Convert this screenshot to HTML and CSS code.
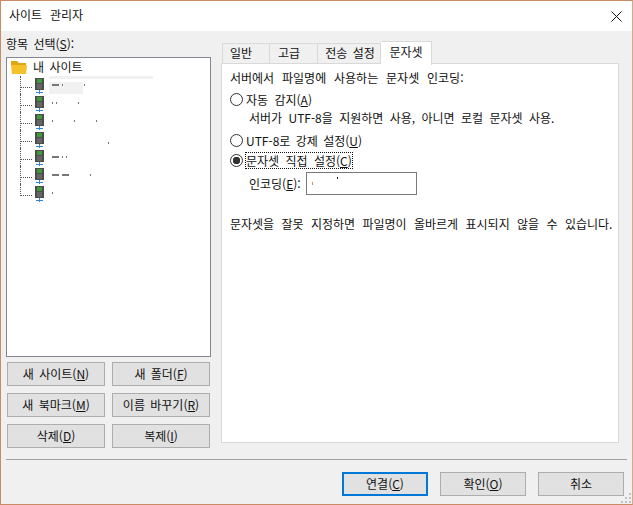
FILE: index.html
```html
<!DOCTYPE html>
<html lang="ko">
<head>
    <meta charset="UTF-8">
    <title>사이트 관리자</title>
    <link rel="stylesheet" href="styles.css">
</head>
<body>
    <svg class="icon-defs" width="0" height="0">
        <symbol id="server" viewBox="0 0 9 16">
            <rect x="0" y="0" width="9" height="12" fill="#4d4d4d"/>
            <rect x="2" y="1" width="5" height="4" fill="#3f9a3a"/>
            <rect x="2" y="6" width="5" height="5" fill="#666"/>
            <rect x="4" y="12" width="1" height="4" fill="#2f86d6"/>
            <rect x="1" y="14" width="7" height="1" fill="#2f86d6"/>
        </symbol>
    </svg>
    <div class="window">
        <div class="titlebar">
            <span class="title">사이트 관리자</span>
            <svg class="close" width="11" height="11" viewBox="0 0 11 11">
                <path d="M0.5 0.5 L10.5 10.5 M10.5 0.5 L0.5 10.5" stroke="#111" stroke-width="1" fill="none"/>
            </svg>
        </div>
        <div class="content">
            <div class="main">
                <!-- left side -->
                <div class="sites">
                    <div class="sites-label">항목 선택(<u>S</u>):</div>
                    <div class="tree">
                        <div class="tree-root">
                            <svg width="16" height="14" viewBox="0 0 16 14">
                                <path d="M0 1 H6 L8 3 H15 V5 H0 Z" fill="#e0a512"/>
                                <path d="M0 5 H16 L15 14 H1 Z" fill="#f5c22c"/>
                            </svg>
                            <span class="root-label">내 사이트</span>
                        </div>
                        <div class="tree-row">
                            <span class="branch"></span>
                            <svg class="server" width="9" height="16"><use href="#server"/></svg>
                            <span class="redacted first"><i class="speck dash"></i><i class="speck"></i><i class="speck far"></i></span>
                        </div>
                        <div class="tree-row">
                            <span class="branch"></span>
                            <svg class="server" width="9" height="16"><use href="#server"/></svg>
                            <span class="redacted"><i class="speck"></i><i class="speck"></i><i class="speck far"></i></span>
                        </div>
                        <div class="tree-row">
                            <span class="branch"></span>
                            <svg class="server" width="9" height="16"><use href="#server"/></svg>
                            <span class="redacted"><i class="speck"></i><i class="speck far"></i><i class="speck far"></i></span>
                        </div>
                        <div class="tree-row">
                            <span class="branch"></span>
                            <svg class="server" width="9" height="16"><use href="#server"/></svg>
                            <span class="redacted"><i class="speck farther"></i></span>
                        </div>
                        <div class="tree-row">
                            <span class="branch"></span>
                            <svg class="server" width="9" height="16"><use href="#server"/></svg>
                            <span class="redacted"><i class="speck dash"></i><i class="speck"></i><i class="speck"></i></span>
                        </div>
                        <div class="tree-row">
                            <span class="branch"></span>
                            <svg class="server" width="9" height="16"><use href="#server"/></svg>
                            <span class="redacted"><i class="speck dash"></i><i class="speck dash"></i><i class="speck far"></i></span>
                        </div>
                        <div class="tree-row last">
                            <span class="branch"></span>
                            <svg class="server" width="9" height="16"><use href="#server"/></svg>
                            <span class="redacted"><i class="speck"></i></span>
                        </div>
                    </div>
                    <div class="site-buttons">
                        <button>새 사이트(<u>N</u>)</button>
                        <button>새 폴더(<u>F</u>)</button>
                        <button>새 북마크(<u>M</u>)</button>
                        <button>이름 바꾸기(<u>R</u>)</button>
                        <button>삭제(<u>D</u>)</button>
                        <button>복제(<u>I</u>)</button>
                    </div>
                </div>

                <!-- right side -->
                <div class="settings">
                    <div class="tabs">
                        <div class="tab tab-general">일반</div>
                        <div class="tab tab-advanced">고급</div>
                        <div class="tab tab-transfer">전송 설정</div>
                        <div class="tab active">문자셋</div>
                    </div>
                    <div class="panel">
                        <p class="intro">서버에서 파일명에 사용하는 문자셋 인코딩:</p>
                        <div class="radio-row first"><span class="radio"></span><span>자동 감지(<u>A</u>)</span></div>
                        <p class="hint">서버가 UTF-8을 지원하면 사용, 아니면 로컬 문자셋 사용.</p>
                        <div class="radio-row utf"><span class="radio"></span><span>UTF-8로 강제 설정(<u>U</u>)</span></div>
                        <div class="radio-row"><span class="radio checked"></span><span class="focused">문자셋 직접 설정(<u>C</u>)</span></div>
                        <div class="encoding">
                            <label>인코딩(<u>E</u>):</label>
                            <div class="encoding-input"><i class="tick"></i><i class="tick top"></i></div>
                        </div>
                        <p class="note">문자셋을 잘못 지정하면 파일명이 올바르게 표시되지 않을 수 있습니다.</p>
                    </div>
                </div>
            </div>
            <div class="footer">
                <button class="primary">연결(<u>C</u>)</button>
                <button>확인(<u>O</u>)</button>
                <button>취소</button>
            </div>
        </div>
        <svg class="grip" width="11" height="11" viewBox="0 0 11 11">
            <path d="M8 0h2v2h-2z M4 4h2v2h-2z M8 4h2v2h-2z M0 8h2v2h-2z M4 8h2v2h-2z M8 8h2v2h-2z" fill="#c4c4c4"/>
        </svg>
    </div>
</body>
</html>
```

FILE: styles.css
```css
html, body {
    margin: 0;
    padding: 0;
}
body {
    font-family: "Noto Sans CJK KR", "Noto Sans", sans-serif;
    font-size: 12px;
    color: #111;
}
.icon-defs {
    display: block;
    height: 0;
}
.window {
    position: relative;
    box-sizing: border-box;
    width: 633px;
    height: 505px;
    display: flex;
    flex-direction: column;
    background: #f0f0f0;
    border: 1px solid #c98b66;
    border-right-color: #d8a88c;
    overflow: hidden;
}
.titlebar {
    box-sizing: border-box;
    height: 30px;
    flex: none;
    background: #fff;
    display: flex;
    align-items: center;
    justify-content: space-between;
    padding: 0 10px 0 8px;
}
.title {
    padding-bottom: 3px;
    word-spacing: 4.5px;
}
.content {
    flex: 1;
    display: flex;
    flex-direction: column;
    padding: 0 5px;
}
.main {
    display: flex;
    height: 412px;
    flex: none;
}
.sites {
    width: 205px;
    flex: none;
}
.sites-label {
    height: 26px;
    line-height: 26px;
    word-spacing: 2px;
}
.tree {
    box-sizing: border-box;
    height: 300px;
    background: #fff;
    border: 1px solid #828790;
    padding: 0 0 0 13px;
}
.tree-root {
    display: flex;
    align-items: center;
    height: 18px;
    margin-left: -9px;
    gap: 6px;
    word-spacing: 2px;
}
.root-label {
    padding-bottom: 2px;
}
.tree-row {
    display: flex;
    align-items: flex-start;
    height: 18px;
    border-left: 1px dotted #555;
}
.tree-row.last {
    border-left-color: transparent;
}
.branch {
    box-sizing: border-box;
    width: 11px;
    height: 12px;
    flex: none;
    border-bottom: 1px dotted #555;
}
.tree-row.last .branch {
    width: 12px;
    margin-left: -1px;
    border-left: 1px dotted #555;
}
.server {
    flex: none;
    margin: 2px 0 0 3px;
}
.redacted {
    display: flex;
    align-items: center;
    gap: 3px;
    height: 18px;
    width: 104px;
    margin-left: 5px;
    padding-left: 3px;
    box-sizing: border-box;
}
.redacted.first {
    background: linear-gradient(#f1f1f1, #f1f1f1) no-repeat 0 0 / 100% 3px, linear-gradient(#f1f1f1, #f1f1f1) no-repeat 0 100% / 34px 12px;
}
.speck {
    display: block;
    width: 1px;
    height: 2px;
    background: #777;
}
.speck.dash {
    width: 7px;
}
.speck.far {
    margin-left: 18px;
}
.speck.farther {
    margin-left: 56px;
    margin-top: 8px;
}
.site-buttons {
    display: grid;
    grid-template-columns: 98px 98px;
    grid-auto-rows: 24px;
    column-gap: 7px;
    row-gap: 7px;
    margin: 5px 0 0 1px;
}
button {
    box-sizing: border-box;
    font-family: inherit;
    font-size: 12px;
    color: #111;
    background: #e1e1e1;
    border: 1px solid #adadad;
    padding: 0 0 1px;
    word-spacing: 2px;
}
.settings {
    margin: 10px 0 0 10px;
    width: 398px;
    flex: none;
    display: flex;
    flex-direction: column;
}
.tabs {
    display: flex;
    align-items: flex-end;
    height: 23px;
    padding-left: 1px;
    position: relative;
    z-index: 1;
    margin-bottom: -1px;
}
.tab {
    box-sizing: border-box;
    height: 21px;
    line-height: 18px;
    border: 1px solid #d9d9d9;
    border-left: none;
    background: #f0f0f0;
    text-align: center;
    word-spacing: 2px;
}
.tab-general {
    width: 48px;
    padding-right: 10px;
    border-left: 1px solid #d9d9d9;
}
.tab-advanced {
    width: 48px;
    padding-right: 9px;
}
.tab-transfer {
    width: 63px;
    padding-left: 2px;
}
.tab.active {
    width: 51px;
    height: 24px;
    line-height: 20px;
    margin-bottom: -1px;
    background: #fff;
    border-bottom: none;
}
.panel {
    box-sizing: border-box;
    height: 380px;
    background: #fff;
    border: 1px solid #d9d9d9;
    padding: 5px 0 0 8px;
    word-spacing: 3px;
}
.panel p {
    margin: 0;
}
.intro {
    line-height: 18px;
    word-spacing: 4.5px;
}
.radio-row {
    display: flex;
    align-items: center;
    height: 20px;
}
.radio-row.first {
    margin-top: 2px;
}
.radio-row.utf {
    margin-top: 3px;
    word-spacing: 2px;
}
.radio {
    box-sizing: border-box;
    width: 13px;
    height: 13px;
    flex: none;
    margin-right: 3px;
    border: 1px solid #333;
    border-radius: 50%;
    background: #fff;
}
.radio.checked {
    background: radial-gradient(circle, #333 0, #333 3.5px, #fff 4px);
}
.hint {
    line-height: 18px;
    margin: 0 0 0 19px !important;
}
.focused {
    outline: 1px dotted #111;
    line-height: 15px;
}
.encoding {
    display: flex;
    align-items: center;
    margin: 2px 0 0 19px;
    gap: 5px;
    word-spacing: 2px;
}
.encoding-input {
    position: relative;
    box-sizing: border-box;
    width: 111px;
    height: 23px;
    background: #fff;
    border: 1px solid #7a7a7a;
}
.tick {
    position: absolute;
    left: 5px;
    top: 9px;
    width: 1px;
    height: 3px;
    background: #d98a60;
}
.tick.top {
    left: 30px;
    top: 4px;
    height: 2px;
    background: #223;
}
.note {
    margin-top: 20px !important;
    line-height: 18px;
    word-spacing: 4px;
}
.footer {
    flex: 1;
    border-top: 1px solid #a0a0a0;
    margin-top: 16px;
    display: flex;
    justify-content: flex-end;
    align-items: flex-start;
    gap: 12px;
    padding: 12px 3px 0 0;
}
.footer button {
    width: 86px;
    height: 24px;
}
.footer .primary {
    border: 2px solid #0078d7;
}
.grip {
    position: absolute;
    right: 0;
    bottom: 0;
}
```
